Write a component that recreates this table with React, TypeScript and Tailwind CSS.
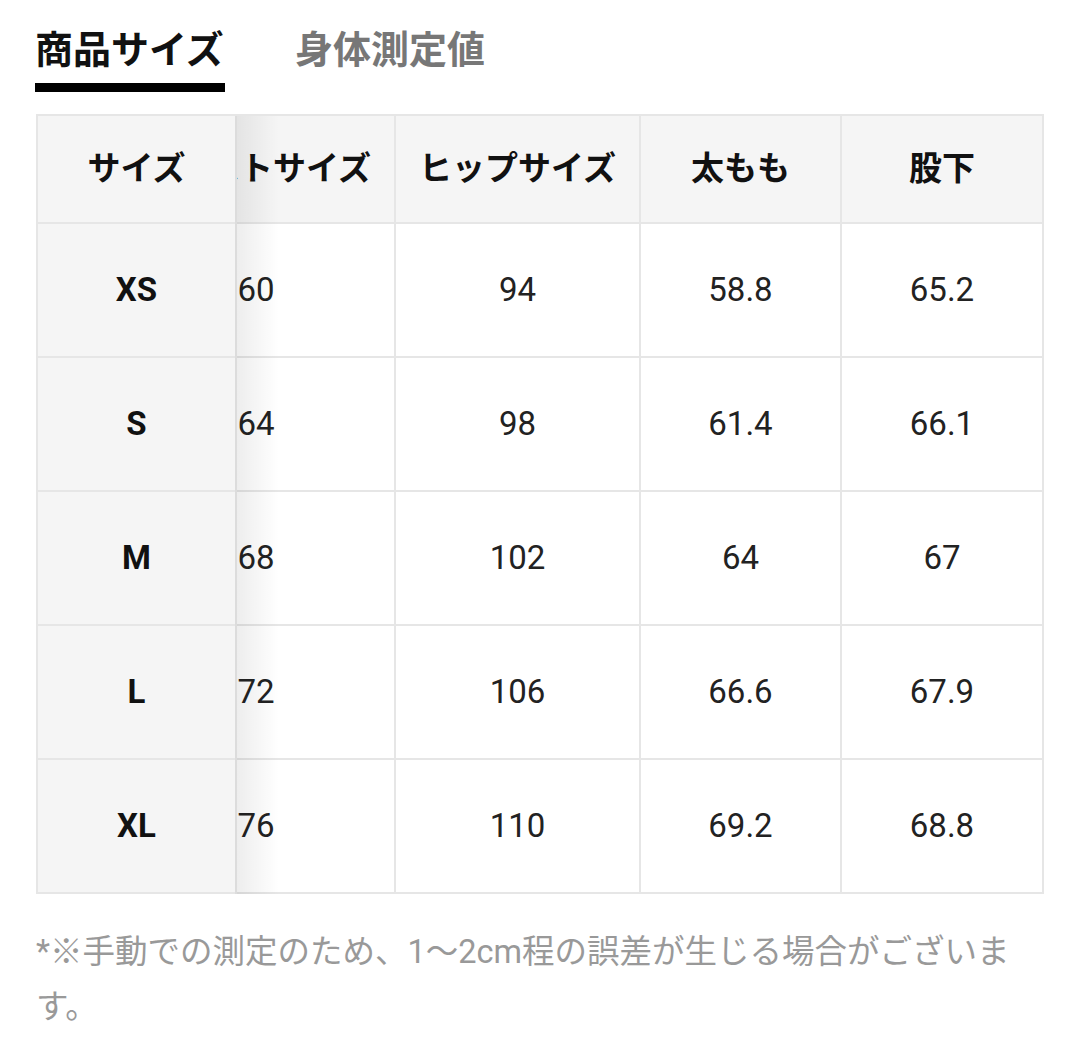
import React from "react";

const FONT = { fontFamily: "Roboto, 'Noto Sans CJK JP', 'Noto Sans', sans-serif" };

const sizes = ["XS", "S", "M", "L", "XL"];
const cols = [
  { label: "ウエストサイズ", w: "w-[278px]", vals: ["60", "64", "68", "72", "76"] },
  { label: "ヒップサイズ", w: "w-[245px]", vals: ["94", "98", "102", "106", "110"] },
  { label: "太もも", w: "w-[201px]", vals: ["58.8", "61.4", "64", "66.6", "69.2"] },
  { label: "股下", w: "w-[202px]", vals: ["65.2", "66.1", "67", "67.9", "68.8"] },
];

export default function App() {
  return (
    <div className="w-[1080px] h-[1052px] bg-white text-black overflow-hidden" style={FONT}>
      <div className="pl-[35px] pt-[30px] flex gap-[70px]">
        <div className="flex flex-col w-[190px]">
          <div className="text-[38px] leading-[40px] font-bold text-[#111]">商品サイズ</div>
          <div className="mt-[13px] h-[9px] bg-black w-[190px]" />
        </div>
        <div className="text-[38px] leading-[40px] font-bold text-[#777]">身体測定値</div>
      </div>

      <div className="mt-[22px] ml-[36px] w-[1008px] flex border-t-2 border-l-2 border-[#e6e6e6]">
        <div className="w-[199px] shrink-0 flex flex-col bg-[#f5f5f5] border-r-2 border-[#dcdcdc]">
          <div className="h-[108px] flex items-center justify-center border-b-2 border-[#e6e6e6] text-[33px] font-bold text-[#111]">
            サイズ
          </div>
          {sizes.map((s) => (
            <div
              key={s}
              className="h-[134px] flex items-center justify-center border-b-2 border-[#e6e6e6] text-[33px] font-bold text-[#111]"
            >
              {s}
            </div>
          ))}
        </div>
        <div className="relative flex-1 overflow-hidden">
          <div className="flex ml-[-119px]">
            {cols.map((c) => (
              <div key={c.label} className={`${c.w} shrink-0 flex flex-col border-r-2 border-[#e6e6e6]`}>
                <div className="h-[108px] flex items-center justify-center bg-[#f5f5f5] border-b-2 border-[#e6e6e6] text-[33px] font-bold text-[#111] whitespace-nowrap">
                  {c.label}
                </div>
                {c.vals.map((v, i) => (
                  <div
                    key={i}
                    className="h-[134px] flex items-center justify-center border-b-2 border-[#e6e6e6] text-[33px] text-[#222]"
                  >
                    {v}
                  </div>
                ))}
              </div>
            ))}
          </div>
          <div className="absolute left-0 top-0 bottom-0 w-[42px] bg-gradient-to-r from-[rgba(0,0,0,0.07)] to-transparent pointer-events-none" />
        </div>
      </div>

      <div className="mt-[31px] ml-[36px] w-[1008px] text-[32.5px] leading-[55px] text-[#999]">
        *※手動での測定のため、1〜2cm程の誤差が生じる場合がございます。
      </div>
    </div>
  );
}
